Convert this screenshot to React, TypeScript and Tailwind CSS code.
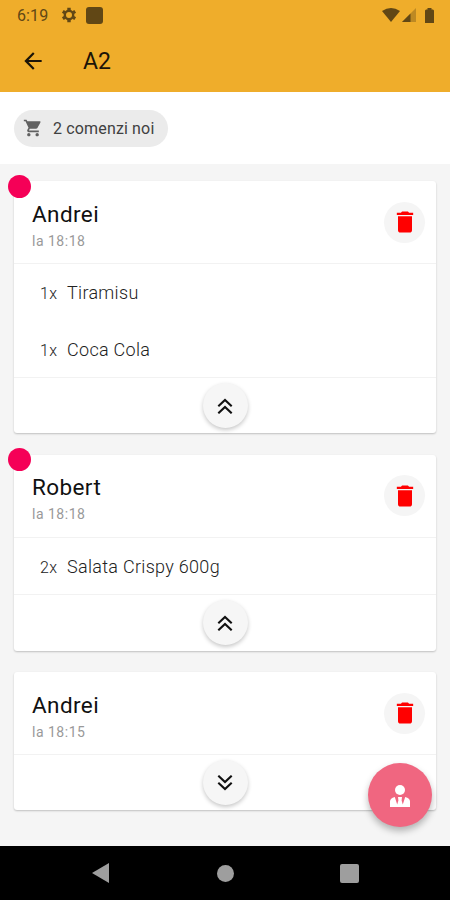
import React, { useState } from "react";
import { MdArrowBack, MdDelete, MdShoppingCart } from "react-icons/md";

interface IOrderItem {
  quantity: number;
  name: string;
}

interface IOrder {
  id: number;
  customer: string;
  time: string;
  isNew: boolean;
  expanded: boolean;
  items: IOrderItem[];
}

const initialOrders: IOrder[] = [
  {
    id: 1,
    customer: "Andrei",
    time: "18:18",
    isNew: true,
    expanded: true,
    items: [
      { quantity: 1, name: "Tiramisu" },
      { quantity: 1, name: "Coca Cola" },
    ],
  },
  {
    id: 2,
    customer: "Robert",
    time: "18:18",
    isNew: true,
    expanded: true,
    items: [{ quantity: 2, name: "Salata Crispy 600g" }],
  },
  {
    id: 3,
    customer: "Andrei",
    time: "18:15",
    isNew: false,
    expanded: false,
    items: [],
  },
];

const StatusBar: React.FC = () => (
  <div className="flex h-[30px] items-center justify-between pl-[17px] pr-[16px] text-[#614715]">
    <div className="flex items-center">
      <span className="w-[44px] pt-px text-[16px] leading-none tracking-[0.1px]">6:19</span>
      <svg viewBox="0 0 16 16" fill="none" stroke="currentColor" className="h-4 w-4">
        <circle cx="8" cy="8" r="4.2" strokeWidth="2.4" />
        <path
          d="M8 .8v2.4M8 12.8v2.4M1.8 4.4l2 1.2M12.2 10.4l2 1.2M14.2 4.4l-2 1.2M3.8 10.4l-2 1.2"
          strokeWidth="3.4"
        />
      </svg>
      <span className="ml-[9px] h-[17px] w-[17px] rounded-[3px] bg-current" />
    </div>
    <div className="flex items-center">
      <svg viewBox="0 0 18 14" fill="currentColor" className="h-[14px] w-[18px]">
        <path d="M0 3Q9-3 18 3L9 14z" />
      </svg>
      <svg viewBox="0 0 14 14" fill="currentColor" className="ml-[2px] h-[14px] w-[14px]">
        <path d="M14 0v14H0z" opacity="0.35" />
        <path d="M8.5 5.5V14H0z" />
      </svg>
      <svg viewBox="0 0 9 15" fill="currentColor" className="ml-[9px] h-[15px] w-[9px]">
        <path d="M2.5 0h4v1.5H8l1 1V15H0V2.5l1-1h1.5z" />
      </svg>
    </div>
  </div>
);

const Chevrons: React.FC<{ up: boolean }> = ({ up }) => (
  <svg
    viewBox="0 0 16 16"
    fill="none"
    stroke="currentColor"
    strokeWidth="2.1"
    className={up ? "h-4 w-4" : "h-4 w-4 rotate-180"}
  >
    <path d="M1.3 8.2L8 1.9l6.7 6.3M1.3 15.3L8 9l6.7 6.3" />
  </svg>
);

interface OrderCardProps {
  order: IOrder;
  onToggle: () => void;
  onDelete: () => void;
}

const OrderCard: React.FC<OrderCardProps> = ({ order, onToggle, onDelete }) => (
  <div className="relative rounded-[3px] bg-white shadow-[0_1px_2px_rgba(0,0,0,0.22)]">
    {order.isNew && (
      <span className="absolute -left-[6px] -top-[6.5px] h-[23px] w-[23px] rounded-full bg-[#f50057]" />
    )}
    <div className="flex h-[82px] items-center justify-between pl-[18px] pr-[11px]">
      <div className="pt-[7px]">
        <h2 className="text-[22.5px] leading-[28px] tracking-[0.4px] text-[#111]">{order.customer}</h2>
        <p className="mt-[2px] text-[14px] leading-[22px] tracking-[0.5px] text-[#999]">la {order.time}</p>
      </div>
      <button
        onClick={onDelete}
        className="flex h-[41px] w-[41px] items-center justify-center rounded-full bg-[#f5f5f5] text-[#f00]"
        aria-label="Șterge"
      >
        <MdDelete className="h-[28px] w-[28px]" />
      </button>
    </div>
    {order.expanded && (
      <ul className="border-t border-[#f2f2f2]">
        {order.items.map((item) => (
          <li key={item.name} className="flex h-[56.5px] items-baseline pl-[26px] pt-[15px] text-[#222]">
            <span className="w-[27px] text-[16px] font-light tracking-[0.4px]">{item.quantity}x</span>
            <span className="text-[18px] font-light tracking-[0.3px]">{item.name}</span>
          </li>
        ))}
      </ul>
    )}
    <div className="flex h-[56.3px] items-center justify-center border-t border-[#f2f2f2]">
      <button
        onClick={onToggle}
        className="flex h-[45px] w-[45px] items-center justify-center rounded-full bg-[#f6f6f6] text-[#111] shadow-[0_2px_4px_rgba(0,0,0,0.22)]"
      >
        <Chevrons up={order.expanded} />
      </button>
    </div>
  </div>
);

const App: React.FC = () => {
  const [orders, setOrders] = useState<IOrder[]>(initialOrders);

  const toggle = (id: number) =>
    setOrders(orders.map((o) => (o.id === id ? { ...o, expanded: !o.expanded } : o)));

  const remove = (id: number) => setOrders(orders.filter((o) => o.id !== id));

  return (
    <div className="relative flex h-[900px] w-[450px] flex-col overflow-hidden bg-[#f5f5f5] font-['Roboto',sans-serif]">
      <header className="h-[92px] shrink-0 bg-[#efad2b]">
        <StatusBar />
        <div className="flex h-[62px] items-center pl-[20px] text-[#1b1408]">
          <MdArrowBack className="-mt-px h-[26px] w-[26px]" />
          <h1 className="ml-[37px] pt-px text-[23px] leading-none">A2</h1>
        </div>
      </header>

      <div className="flex h-[72px] shrink-0 items-center bg-white pl-[14px]">
        <div className="flex h-[37px] w-[154px] items-center rounded-full bg-[#ebebeb] pl-[9px]">
          <MdShoppingCart className="h-5 w-5 text-[#616161]" />
          <span className="ml-[10px] whitespace-nowrap pt-[2px] text-[16px] tracking-[0.15px] text-[#404040]">
            {orders.filter((o) => o.isNew).length} comenzi noi
          </span>
        </div>
      </div>

      <main className="flex min-h-0 flex-1 flex-col gap-[21.5px] px-[14px] pt-[17px]">
        {orders.map((order) => (
          <OrderCard
            key={order.id}
            order={order}
            onToggle={() => toggle(order.id)}
            onDelete={() => remove(order.id)}
          />
        ))}
      </main>

      <button
        className="absolute bottom-[73px] right-[18px] flex h-[64px] w-[64px] items-center justify-center rounded-full bg-[#f06680] text-white shadow-[0_4px_7px_rgba(0,0,0,0.28)]"
        aria-label="Client"
      >
        <svg viewBox="0 0 20 22" fill="currentColor" className="mt-[2px] h-[22px] w-[20px]">
          <circle cx="10" cy="5" r="5" />
          <path d="M0 22v-5.5Q0 13 4.8 12l2.4 7.5 1.2-4L8 12h4l-.4 3.5 1.2 4L15.2 12Q20 13 20 16.5V22z" />
        </svg>
      </button>

      <nav className="flex h-[54px] shrink-0 items-center bg-black pl-[92px] text-[#9e9e9e]">
        <svg viewBox="0 0 17 20" fill="currentColor" className="h-5 w-[17px]">
          <path d="M0 10L17 0v20z" />
        </svg>
        <span className="ml-[108px] h-[17px] w-[17px] rounded-full bg-current" />
        <span className="ml-[106px] h-[19px] w-[19px] rounded-[2px] bg-current" />
      </nav>
    </div>
  );
};

export default App;
